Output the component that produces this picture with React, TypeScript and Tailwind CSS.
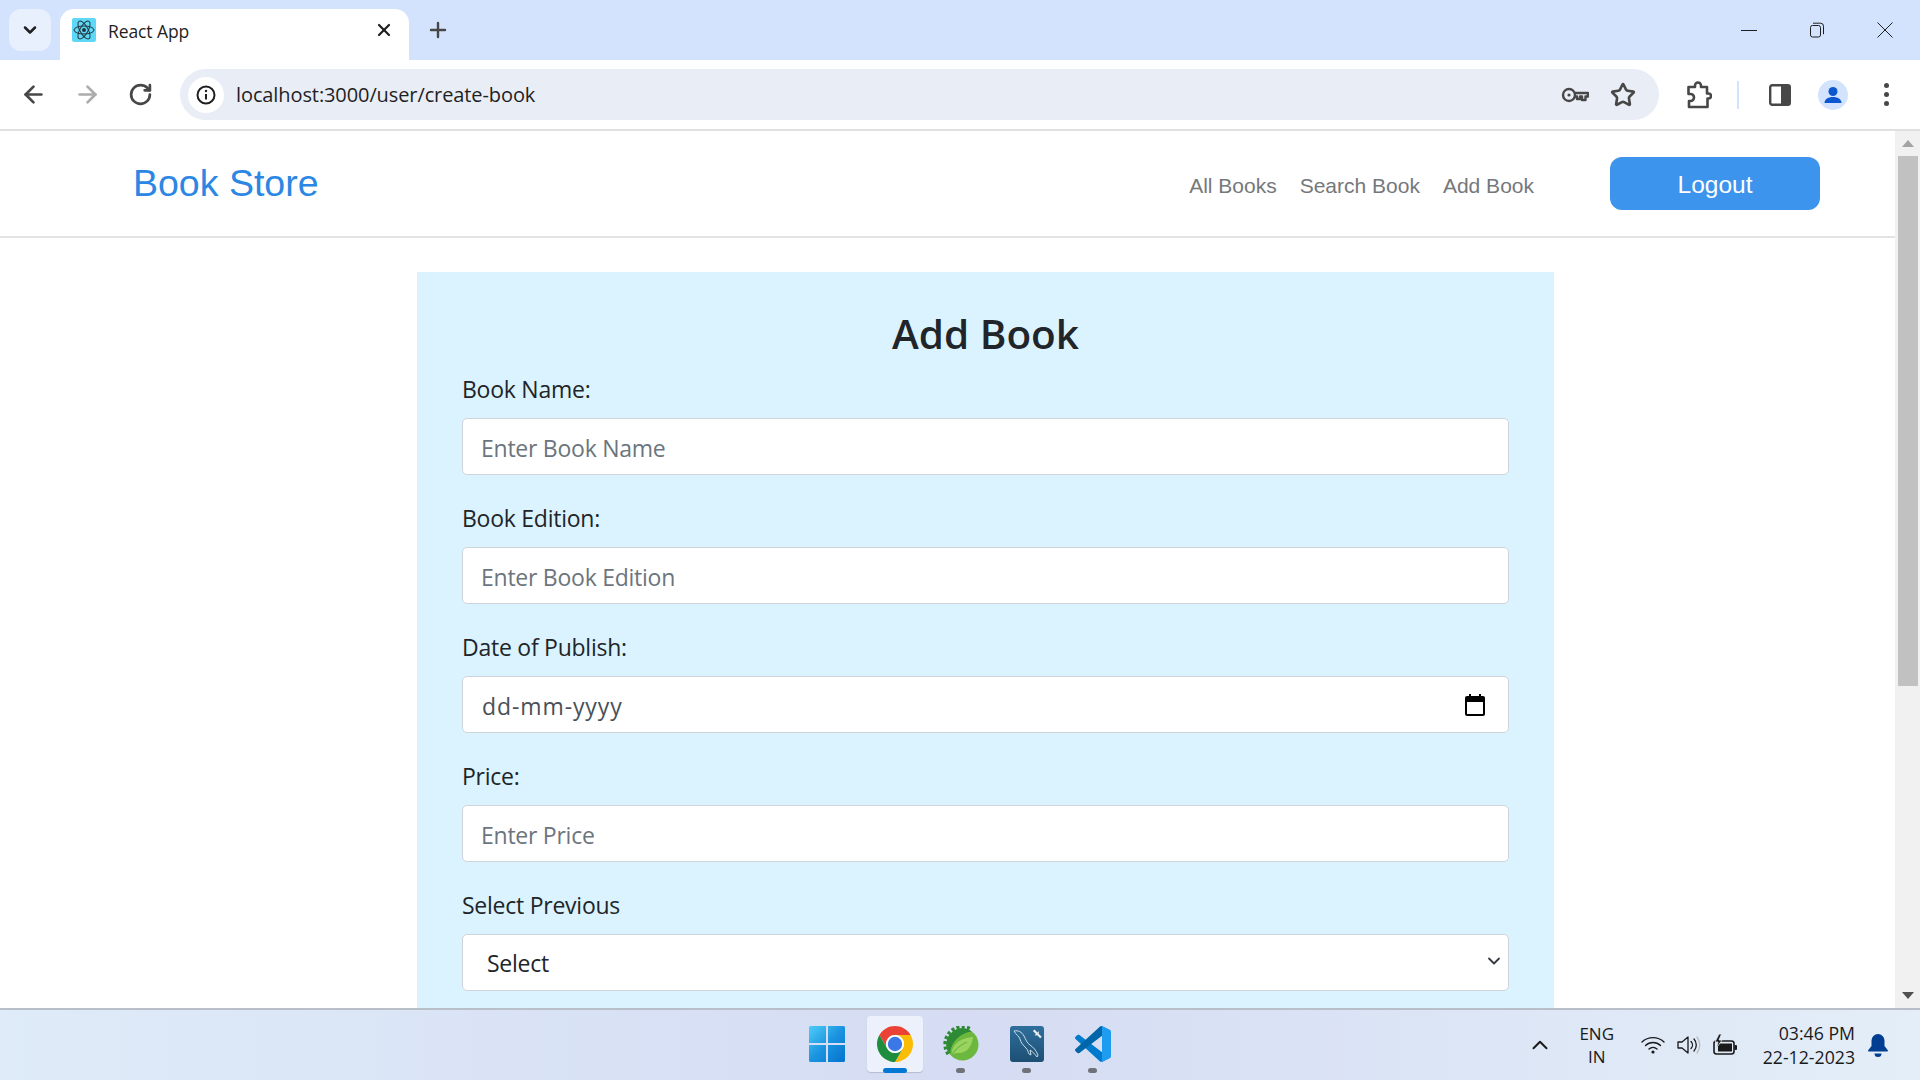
import React from 'react';
import { ArrowLeft, ArrowRight, ChevronDown, ChevronUp, Plus, RotateCw, Star, X } from 'lucide-react';

const uiFont = "font-['Open_Sans','Noto_Sans',sans-serif]";

const ReactIcon = () => (
  <svg viewBox="0 0 24 24" className="w-6 h-6">
    <rect width="24" height="24" rx="2" fill="#5fd8f8" />
    <circle cx="12" cy="12" r="2" fill="#20343c" />
    <g fill="none" stroke="#20343c" strokeWidth="1">
      <ellipse cx="12" cy="12" rx="10" ry="4" />
      <ellipse cx="12" cy="12" rx="10" ry="4" transform="rotate(60 12 12)" />
      <ellipse cx="12" cy="12" rx="10" ry="4" transform="rotate(120 12 12)" />
    </g>
  </svg>
);

const KeyIcon = () => (
  <svg viewBox="0 0 28 20" className="w-[28px] h-[20px]" fill="none" stroke="#474747" strokeWidth="2.4">
    <circle cx="8" cy="10" r="6" />
    <circle cx="8" cy="10" r="1.6" fill="#474747" stroke="none" />
    <path d="M14 8h13v3.5h-2.5V15H21v-3.5h-2V14h-3v-2.500h-2" strokeLinejoin="round" />
  </svg>
);

const PuzzleIcon = () => (
  <svg viewBox="0 0 26 28" className="w-[26px] h-[28px]" fill="none" stroke="#474747" strokeWidth="2.6" strokeLinejoin="round">
    <path d="M2.500 6h6.500V4.500a3 3 0 0 1 6 0V6h6v6.500h1.500a2.500 2.500 0 0 1 0 5H21.500V26H3v-6h1.500a3 3 0 0 0 0-7H2.500Z" />
  </svg>
);

const SidePanelIcon = () => (
  <svg viewBox="0 0 22 22" className="w-[22px] h-[22px]">
    <rect x="1.200" y="1.200" width="19.600" height="19.600" rx="2" fill="none" stroke="#474747" strokeWidth="2.400" />
    <rect x="12" y="1.200" width="8.800" height="19.600" fill="#474747" />
  </svg>
);

const ProfileIcon = () => (
  <svg viewBox="0 0 30 30" className="w-[30px] h-[30px]">
    <circle cx="15" cy="15" r="15" fill="#d3e3fd" />
    <circle cx="15" cy="11.500" r="4.500" fill="#0b57d0" />
    <path d="M6.500 23c0-4 4-6 8.500-6s8.500 2 8.500 6Z" fill="#0b57d0" />
  </svg>
);

const RestoreIcon = () => (
  <svg viewBox="0 0 16 16" className="w-4 h-4" fill="none" stroke="#1f1f1f" strokeWidth="1">
    <rect x="1.500" y="3.500" width="10" height="11.500" rx="2" />
    <path d="M4 1.200h7.500a3 3 0 0 1 3 3v8" />
  </svg>
);

const CloseIcon = () => (
  <svg viewBox="0 0 16 16" className="w-4 h-4" fill="none" stroke="#1f1f1f" strokeWidth="1">
    <path d="M.5.500l15 15M15.500.500l-15 15" />
  </svg>
);

const WindowsLogo = () => (
  <svg viewBox="0 0 36 36" className="w-[36px] h-[36px]">
    <defs>
      <linearGradient id="win" x1="0" y1="0" x2="1" y2="1">
        <stop offset="0" stopColor="#4fcdf8" />
        <stop offset="0.5" stopColor="#1b94e0" />
        <stop offset="1" stopColor="#0473ce" />
      </linearGradient>
    </defs>
    <path d="M0 1.500A1.500 1.500 0 0 1 1.500 0H17v17H0ZM19 0h15.500A1.500 1.500 0 0 1 36 1.500V17H19ZM0 19h17v17H1.500A1.500 1.500 0 0 1 0 34.500ZM19 19h17v15.500a1.500 1.500 0 0 1-1.500 1.500H19Z" fill="url(#win)" />
  </svg>
);

const ChromeLogo = () => (
  <svg viewBox="2 2 44 44" className="w-[36px] h-[36px]">
    <path d="M4.950 13A22 22 0 0 1 43.050 13H24A11 11 0 0 0 14.470 29.500Z" fill="#ea4335" />
    <path d="M43.050 13A22 22 0 0 1 24 46L33.530 29.500A11 11 0 0 0 24 13Z" fill="#fbbc04" />
    <path d="M24 46A22 22 0 0 1 4.950 13L14.470 29.500A11 11 0 0 0 33.530 29.500Z" fill="#1e8e3e" />
    <circle cx="24" cy="24" r="11" fill="#fff" />
    <circle cx="24" cy="24" r="8.800" fill="#3b78e7" />
  </svg>
);

const SpringLogo = () => (
  <svg viewBox="0 0 36 36" className="w-[36px] h-[36px]">
    <path d="M5.500 28A17 17 0 0 1 28 3.500" fill="none" stroke="#2f8a35" strokeWidth="4" strokeDasharray="3 2.200" />
    <circle cx="19.500" cy="18.500" r="16" fill="#6cb83f" />
    <path d="M6 27A16 16 0 0 1 29 5.500C20 6 9 14 6 27Z" fill="#2f8a35" />
    <path d="M3.500 18.500A16 16 0 0 1 19.500 2.500c3 0 6 1 8 2.500C17 6 8 15 7 28a16 16 0 0 1-3.500-9.500Z" fill="#2f8a35" />
    <path d="M9 29c-1-9 7-17 21-18-1 11-8 17-16 16-2 0-4 1-5 2Z" fill="#9ad35f" />
    <path d="M9 29c3-6 8-10 15-13" fill="none" stroke="#6cb83f" strokeWidth="1.200" />
  </svg>
);

const MysqlLogo = () => (
  <svg viewBox="0 0 34 36" className="w-[34px] h-[36px]">
    <defs>
      <linearGradient id="sql" x1="0" y1="0" x2="0" y2="1">
        <stop offset="0" stopColor="#2f6f9c" />
        <stop offset="1" stopColor="#1d4f74" />
      </linearGradient>
    </defs>
    <rect width="34" height="36" rx="3" fill="url(#sql)" />
    <path d="M4 5c4-1 8 1 10 5 2 4 3 7 6 9 3 2 6 5 8 10l-1 2c-2-3-4-5-7-7l1 5-2-1c-1-2-1-4-3-6-3-3-5-5-6-9C9 10 6 9 4 5Z" fill="none" stroke="#dbe6ee" strokeWidth="0.900" strokeLinejoin="round" />
    <path d="M24.500 3.500l3 3 1.500-1.500-.3 2.800 3 3-1.500 1.500-3-3-2.800.3 1.500-1.500-3-3Z" fill="#e8eef3" />
  </svg>
);

const VSCodeLogo = () => (
  <svg viewBox="0 0 100 100" className="w-[36px] h-[36px]">
    <path d="M96.500 89.200 75.900 99.100c-2.400 1.200-5.200.7-7.100-1.200L1.400 36.400c-1.800-1.700-1.800-4.500 0-6.200l5.500-5c1.500-1.300 3.700-1.400 5.300-.2l81.200 61.500c2.700 2.100 6.600.1 6.600-3.300v.2c0 2.400-1.400 4.700-3.500 5.800Z" fill="#007acc" />
    <path d="M96.500 10.800 75.900.9c-2.400-1.200-5.200-.7-7.100 1.200L1.400 63.600c-1.800 1.700-1.800 4.500 0 6.200l5.500 5c1.500 1.300 3.700 1.400 5.300.2L93.400 13.500c2.700-2.100 6.600-.1 6.600 3.300v-.2c0-2.400-1.400-4.700-3.500-5.800Z" fill="#0065a9" />
    <path d="M75.900 99.100c-2.400 1.200-5.200.7-7.100-1.200 2.300 2.300 6.200.7 6.200-2.600V4.700c0-3.300-3.900-4.900-6.200-2.600 1.900-1.900 4.700-2.400 7.100-1.200l20.600 9.900c2.200 1 3.500 3.200 3.500 5.600v67.200c0 2.400-1.400 4.600-3.500 5.600Z" fill="#1f9cf0" />
  </svg>
);

const WifiIcon = () => (
  <svg viewBox="0 0 24 18" className="w-6 h-[18px]" fill="none" stroke="#1a1a1a" strokeWidth="1.400" strokeLinecap="round">
    <path d="M1 6a16 16 0 0 1 22 0M4.500 9.500a11 11 0 0 1 15 0M8 13a6 6 0 0 1 8 0" />
    <circle cx="12" cy="16" r="1.600" fill="#1a1a1a" stroke="none" />
  </svg>
);

const VolumeIcon = () => (
  <svg viewBox="0 0 24 20" className="w-6 h-5" fill="none" stroke="#1a1a1a" strokeWidth="1.300" strokeLinejoin="round">
    <path d="M1 7h4l6-5v16l-6-5H1Z" />
    <path d="M14 6.500a5 5 0 0 1 0 7M17 4a9 9 0 0 1 0 12" strokeLinecap="round" />
    <path d="M20 2a13 13 0 0 1 0 16" stroke="#bbb" strokeLinecap="round" />
  </svg>
);

const BatteryIcon = () => (
  <svg viewBox="0 0 24 22" className="w-6 h-[22px]">
    <rect x="1" y="7" width="20" height="13" rx="2.500" fill="none" stroke="#1a1a1a" strokeWidth="1.600" />
    <rect x="21.500" y="11" width="2.500" height="5" rx="1" fill="#1a1a1a" />
    <rect x="5" y="9.500" width="14" height="8" fill="#1a1a1a" />
    <path d="M6 0 2 8h3l-1.500 6L9 6H6l2.500-6Z" fill="#1a1a1a" stroke="#e2ecf7" strokeWidth="0.800" />
  </svg>
);

const BellIcon = () => (
  <svg viewBox="0 0 20 24" className="w-5 h-6" fill="#003e92">
    <path d="M10 1a6.500 6.500 0 0 0-6.500 6.500V13L0 17.500c0 .8.500 1 1 1h18c.5 0 1-.2 1-1L16.500 13V7.500A6.500 6.500 0 0 0 10 1Z" />
    <path d="M6.500 20.500h7a3.500 3.500 0 0 1-7 0Z" />
  </svg>
);

const TaskbarApp: React.FC<{ children: React.ReactNode; active?: boolean; dot?: boolean }> = ({ children, active, dot }) => (
  <div className={`relative w-[56px] h-[56px] rounded-[4px] flex justify-center pt-[10px] ${active ? 'bg-[#edf1fb] shadow-[0_1px_1px_rgba(0,0,0,0.15)]' : ''}`}>
    {children}
    {active && <span className="absolute bottom-[-1px] left-[16px] w-[24px] h-[5px] rounded-full bg-[#0078d4]" />}
    {dot && <span className="absolute bottom-[-1px] left-[23px] w-[9px] h-[5px] rounded-full bg-[#6f7379]" />}
  </div>
);

const inputClass = `block w-full h-[57px] bg-white border border-[#ced4da] rounded-[5px] px-[18px] pt-[2px] text-[23px] tracking-[-0.25px] text-[#212529] placeholder:text-[#6c757d] outline-none ${uiFont}`;

const Field: React.FC<{ label: string; children: React.ReactNode }> = ({ label, children }) => (
  <div className="mb-[25px]">
    <label className={`block h-[36px] leading-[36px] mb-[11px] text-[23px] tracking-[-0.25px] text-[#212529] ${uiFont}`}>{label}</label>
    {children}
  </div>
);

export default function App() {
  return (
    <div className="w-[1920px] h-[1080px] flex flex-col overflow-hidden bg-white">
      {/* tab strip */}
      <div className="h-[60px] shrink-0 bg-[#d3e3fd] flex items-end pl-[9px] pr-[27px]">
        <div className="w-[42px] h-[42px] mb-[9px] rounded-[12px] bg-[#e9f0fd] flex items-center justify-center">
          <ChevronDown className="w-[20px] h-[20px] text-[#1f1f1f]" strokeWidth={3} />
        </div>
        <div className="ml-[9px] w-[349px] h-[51px] bg-white rounded-t-[14px] flex items-center pl-[12px] pr-[15px] pb-[9px]">
          <ReactIcon />
          <span className={`ml-[12px] mt-[3px] text-[17.500px] tracking-[-0.100px] text-[#1f1f1f] ${uiFont}`}>React App</span>
          <X className="ml-auto w-[20px] h-[20px] text-[#1f1f1f]" strokeWidth={2.600} />
        </div>
        <Plus className="ml-[17px] mb-[18px] w-[24px] h-[24px] text-[#474747]" strokeWidth={2.400} />
        <div className="ml-auto flex items-center gap-[52px] h-full">
          <span className="w-[16px] h-px bg-[#1f1f1f]" />
          <RestoreIcon />
          <CloseIcon />
        </div>
      </div>

      {/* toolbar */}
      <div className="h-[71px] shrink-0 bg-white border-b-2 border-[#e0e0e0] flex items-start pt-[9px] pl-[20px] pr-[16px]">
        <div className="h-[51px] flex items-center">
          <ArrowLeft className="w-[27px] h-[27px] text-[#474747]" strokeWidth={2.400} />
          <ArrowRight className="ml-[27px] w-[27px] h-[27px] text-[#acacac]" strokeWidth={2.400} />
          <RotateCw className="ml-[27px] w-[25px] h-[25px] text-[#474747]" strokeWidth={2.600} />
        </div>
        <div className="ml-[27px] w-[1479px] h-[51px] rounded-full bg-[#e9edf6] flex items-center pl-[8px] pr-[23px]">
          <div className="w-[36px] h-[36px] rounded-full bg-white flex items-center justify-center">
            <svg viewBox="0 0 20 20" className="w-[20px] h-[20px]" fill="none" stroke="#1f1f1f" strokeWidth="2">
              <circle cx="10" cy="10" r="8.500" />
              <path d="M10 9v5.500" />
              <circle cx="10" cy="6" r="1.200" fill="#1f1f1f" stroke="none" />
            </svg>
          </div>
          <span className={`ml-[12px] text-[20px] tracking-[-0.100px] text-[#1f1f1f] ${uiFont}`}>localhost:3000/user/create-book</span>
          <div className="ml-auto flex items-center gap-[21px]">
            <KeyIcon />
            <Star className="w-[26px] h-[26px] text-[#474747]" strokeWidth={2.400} />
          </div>
        </div>
        <div className="h-[51px] flex items-center">
          <div className="ml-[27px]"><PuzzleIcon /></div>
          <span className="ml-[25px] w-[2px] h-[28px] bg-[#d3e3fd]" />
          <div className="ml-[30px]"><SidePanelIcon /></div>
          <div className="ml-[27px]"><ProfileIcon /></div>
          <div className="ml-[36px] flex flex-col gap-[4px]">
            <span className="w-[5px] h-[5px] rounded-full bg-[#474747]" />
            <span className="w-[5px] h-[5px] rounded-full bg-[#474747]" />
            <span className="w-[5px] h-[5px] rounded-full bg-[#474747]" />
          </div>
        </div>
      </div>

      {/* page */}
      <div className="flex-1 min-h-0 flex">
        <div className="flex-1 min-w-0 overflow-hidden">
          <nav className="h-[107px] border-b-2 border-[#e3e3e3] flex items-center pl-[133px] pr-[75px] font-['Liberation_Sans',sans-serif]">
            <a className="text-[37.500px] text-[#2b87e3]">Book Store</a>
            <div className="ml-auto flex items-center gap-[23px] text-[21px] text-[#75787b] pt-[4px]">
              <a>All Books</a>
              <a>Search Book</a>
              <a>Add Book</a>
            </div>
            <button className="ml-[76px] w-[210px] h-[53px] rounded-[12px] bg-[#3d94ec] text-white text-[24.500px] pt-[4px] mt-[-1px]">Logout</button>
          </nav>
          <div className="ml-[417px] mt-[34px] w-[1137px] bg-[#dbf3ff] px-[45px] pt-[37px] pb-[40px]">
            <h2 className={`h-[50px] leading-[50px] mb-[12px] text-center text-[40.500px] font-semibold text-[#212529] ${uiFont}`}>Add Book</h2>
            <Field label="Book Name:">
              <input className={inputClass} placeholder="Enter Book Name" />
            </Field>
            <Field label="Book Edition:">
              <input className={inputClass} placeholder="Enter Book Edition" />
            </Field>
            <Field label="Date of Publish:">
              <div className={`${inputClass} flex items-center justify-between pr-[23px] pl-[19px] text-[#495057]`}>
                <span className="tracking-[0.900px] mt-[1px]">dd-mm-yyyy</span>
                <svg viewBox="0 0 20 22" className="w-[20px] h-[22px] mt-[-2px]" fill="#000">
                  <path d="M2 2h2V0h2v2h8V0h2v2h2a2 2 0 0 1 2 2v16a2 2 0 0 1-2 2H2a2 2 0 0 1-2-2V4a2 2 0 0 1 2-2Zm0 6v12h16V8Z" />
                </svg>
              </div>
            </Field>
            <Field label="Price:">
              <input className={inputClass} placeholder="Enter Price" />
            </Field>
            <Field label="Select Previous">
              <div className="relative">
                <select className={`${inputClass} appearance-none pl-[24px]`} defaultValue="Select">
                  <option>Select</option>
                </select>
                <ChevronDown className="absolute right-[5px] top-[17px] w-[20px] h-[20px] text-[#343a40]" strokeWidth={2.200} />
              </div>
            </Field>
          </div>
        </div>

        {/* scrollbar */}
        <div className="w-[25px] shrink-0 bg-[#f1f1f1] flex flex-col items-center">
          <div className="h-[25px] flex items-center justify-center">
            <span className="w-0 h-0 border-x-[6px] border-x-transparent border-b-[7px] border-b-[#a3a3a3]" />
          </div>
          <div className="w-[20px] h-[530px] bg-[#c1c1c1]" />
          <div className="mt-auto h-[25px] flex items-center justify-center">
            <span className="w-0 h-0 border-x-[6px] border-x-transparent border-t-[7px] border-t-[#505050]" />
          </div>
        </div>
      </div>

      {/* taskbar */}
      <div className="h-[72px] shrink-0 border-t-2 border-[#b9bfc9] bg-gradient-to-r from-[#deebf8] via-[#d5dcf3] to-[#e3eef8] grid grid-cols-[1fr_auto_1fr] items-start">
        <div />
        <div className="flex items-start pt-[6px]">
          <div className="mr-[12px]"><TaskbarApp><WindowsLogo /></TaskbarApp></div>
          <TaskbarApp active><ChromeLogo /></TaskbarApp>
          <div className="ml-[10px]"><TaskbarApp dot><SpringLogo /></TaskbarApp></div>
          <div className="ml-[10px]"><TaskbarApp dot><MysqlLogo /></TaskbarApp></div>
          <div className="ml-[10px]"><TaskbarApp dot><VSCodeLogo /></TaskbarApp></div>
        </div>
        <div className={`flex items-center justify-end h-[70px] pr-[32px] text-[#1a1a1a] ${uiFont}`}>
          <ChevronUp className="w-[26px] h-[26px]" strokeWidth={1.800} />
          <div className="ml-[24px] w-[40px] text-center text-[17px] leading-[23px]">ENG<br />IN</div>
          <div className="ml-[24px] flex items-center gap-[12px]">
            <WifiIcon />
            <VolumeIcon />
            <BatteryIcon />
          </div>
          <div className="ml-[26px] text-right text-[17.700px] leading-[24px]">03:46 PM<br />22-12-2023</div>
          <div className="ml-[13px]"><BellIcon /></div>
        </div>
      </div>
    </div>
  );
}
